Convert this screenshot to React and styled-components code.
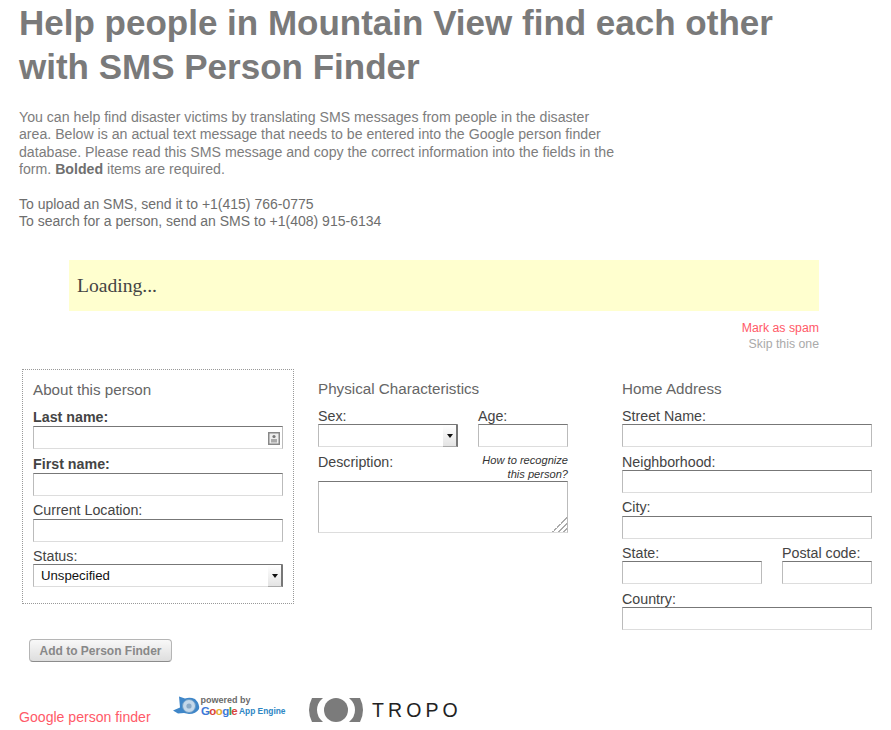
import React from 'react'
import styled, { createGlobalStyle } from 'styled-components'

const GlobalStyle = createGlobalStyle`
  html, body { margin: 0; padding: 0; background: #fff; overflow: hidden; }
  body { font-family: "Liberation Sans", Arial, sans-serif; }
  * { box-sizing: border-box; }
`

const Page = styled.div`
  width: 891px;
  height: 730px;
  overflow: hidden;
  display: flex;
  flex-direction: column;
`

const Intro = styled.div`
  padding-left: 19px;
`

const Title = styled.h1`
  margin: 1px 0 0;
  font-size: 35px;
  line-height: 44px;
  font-weight: bold;
  color: #7a7a7a;
  width: 800px;
`

const Blurb = styled.p`
  margin: 20px 0 0;
  width: 600px;
  font-size: 14.15px;
  line-height: 17.4px;
  color: #7d7d7d;
  b { color: #6f6f6f; }
`

const Numbers = styled(Blurb)`
  margin-top: 17px;
  font-size: 14px;
  color: #6e6e6e;
`

const MessageBox = styled.div`
  margin: 30px 0 0 69px;
  width: 750px;
  height: 51px;
  background: #ffffcf;
  padding-left: 8px;
  display: flex;
  align-items: center;
  font-family: "Liberation Serif", serif;
  font-size: 19.6px;
  color: #444;
`

const Actions = styled.div`
  width: 819px;
  margin-top: 9px;
  text-align: right;
  font-size: 12.3px;
  line-height: 16px;
`

const ActionLink = styled.div`
  color: ${p => p.$color};
`

const Columns = styled.div`
  display: flex;
  margin: 17px 0 0 22px;
  align-items: flex-start;
`

const Card = styled.div`
  width: 272px;
  height: 235px;
  border: 1px dotted #999;
  padding: 11px 10px 0;
`

const CardTitle = styled.h2`
  margin: 0 0 11px;
  font-size: 15.2px;
  line-height: 17px;
  font-weight: normal;
  color: #666;
`

const Column = styled.div`
  width: 250px;
  margin-left: ${p => p.$gap}px;
  padding-top: 11px;
`

const SectionTitle = styled(CardTitle)`
  margin-bottom: 10px;
`

const Field = styled.div`
  position: relative;
  margin-bottom: ${p => p.$gap ?? 6}px;
  width: ${p => p.$width ? `${p.$width}px` : 'auto'};
`

const Label = styled.label`
  display: block;
  height: 17px;
  padding-top: ${p => p.$lift ? 0 : 1}px;
  font-size: 14.25px;
  line-height: 16px;
  font-weight: ${p => p.$bold ? 'bold' : 'normal'};
  color: #444;
`

const TextInput = styled.input`
  display: block;
  width: 100%;
  height: 23px;
  margin: 0;
  padding: 0 4px;
  border: 1px solid;
  border-color: #777 #bbb #ddd;
  border-radius: 0;
  background: #fff;
  outline: none;
`

const SelectWrap = styled.div`
  position: relative;
`

const Select = styled.select`
  display: block;
  width: 100%;
  height: 23px;
  padding: 0 7px;
  border: 1px solid;
  border-color: #777 #bbb #ddd;
  border-radius: 0;
  background: #fff;
  appearance: none;
  font-family: "Liberation Sans", Arial, sans-serif;
  font-size: 13.2px;
  color: #111;
`

const SelectArrow = styled.span`
  position: absolute;
  top: 1px;
  right: 0;
  width: 15px;
  height: 22px;
  background: linear-gradient(#fff, #e4e4e4);
  border-right: 2px solid #777;
  border-bottom: 1px solid #aaa;
  pointer-events: none;
  &::after {
    content: "";
    position: absolute;
    left: 4px;
    top: 9px;
    border: 3.5px solid transparent;
    border-top: 4px solid #111;
    border-bottom: 0;
  }
`

const ContactIcon = styled.svg`
  position: absolute;
  right: 3px;
  top: 23px;
`

const FieldRow = styled.div`
  display: flex;
  justify-content: space-between;
`

const DescriptionHead = styled.div`
  display: flex;
  justify-content: space-between;
  align-items: flex-start;
  height: 29px;
  margin-top: 5px;
`

const DescriptionLabel = styled(Label)`
  margin-top: 1px;
`

const Hint = styled.div`
  font-size: 11.1px;
  line-height: 14px;
  font-style: italic;
  text-align: right;
  color: #333;
  padding-top: 1px;
`

const Description = styled.textarea`
  display: block;
  width: 250px;
  height: 52px;
  margin: 0;
  border: 1px solid;
  border-color: #777 #bbb #ddd;
  border-radius: 0;
  outline: none;
  &::-webkit-resizer {
    background: linear-gradient(135deg, transparent 50%, #aaa 50%, #aaa 56%, transparent 56%, transparent 68%, #aaa 68%, #aaa 74%, transparent 74%, transparent 86%, #aaa 86%, #aaa 92%, transparent 92%);
  }
`

const AddButton = styled.button`
  align-self: flex-start;
  margin: 3px 0 0 29px;
  width: 143px;
  height: 23px;
  padding: 0;
  border: 1px solid #b5b5b5;
  border-bottom-color: #8c8c8c;
  border-radius: 4px;
  background: linear-gradient(#f8f8f8, #dedede);
  font-family: "Liberation Sans", Arial, sans-serif;
  font-size: 12px;
  font-weight: bold;
  color: #888;
`

const Footer = styled.div`
  display: flex;
  align-items: flex-start;
  margin: 32px 0 0 19px;
`

const FinderLink = styled.div`
  width: 153px;
  margin-top: 15px;
  font-size: 14.1px;
  line-height: 17px;
  color: #ff5a68;
`

const AppEngineLogo = () => (
  <svg width="115" height="26" viewBox="0 0 115 26" style={{ display: 'block' }}>
    <path d="M1 16.5 L8 13.5 L7 2.5 L13 4.5 Q18 3 23 5 Q28 10 27 15 Q24 20 17 20 L12 19 L6 19.5 Z" fill="#3f86c8" />
    <circle cx="17" cy="12" r="6.5" fill="#c4d8ea" stroke="#6c9cc6" strokeWidth="1" />
    <circle cx="17" cy="12" r="2.6" fill="#8aa9c6" />
    <text x="28.5" y="8.5" fontFamily="Liberation Sans, Arial, sans-serif" fontSize="9" fontWeight="bold" fill="#6a6a6a">powered by</text>
    <text x="29" y="21" fontFamily="Liberation Sans, Arial, sans-serif" fontSize="11.5" fontWeight="bold" letterSpacing="-0.6">
      <tspan fill="#3b78d8">G</tspan>
      <tspan fill="#d9453a">o</tspan>
      <tspan fill="#e8b02c">o</tspan>
      <tspan fill="#3b78d8">g</tspan>
      <tspan fill="#3c9b4a">l</tspan>
      <tspan fill="#d9453a">e</tspan>
    </text>
    <text x="67" y="20" fontFamily="Liberation Sans, Arial, sans-serif" fontSize="8.4" fontWeight="bold" fill="#2d86c4">App Engine</text>
  </svg>
)

const TropoLogo = () => (
  <svg width="160" height="26" viewBox="0 0 160 26" style={{ display: 'block', margin: '3px 0 0 21px' }}>
    <circle cx="28" cy="13" r="12" fill="#7b7b7b" />
    <path d="M4 1 H15 Q9 6 9 13 Q9 20 15 25 H4 Q1 19 1 13 Q1 7 4 1 Z" fill="#7b7b7b" />
    <path d="M52 1 H41 Q47 6 47 13 Q47 20 41 25 H52 Q55 19 55 13 Q55 7 52 1 Z" fill="#7b7b7b" />
    <text x="64" y="20" fontFamily="Liberation Sans, Arial, sans-serif" fontSize="19.5" fill="#222" letterSpacing="4.1">TROPO</text>
  </svg>
)

const App = () => (
  <Page>
    <GlobalStyle />
    <Intro>
      <Title>Help people in Mountain View find each other with SMS Person Finder</Title>
      <Blurb>
        You can help find disaster victims by translating SMS messages from people in the disaster
        area. Below is an actual text message that needs to be entered into the Google person finder
        database. Please read this SMS message and copy the correct information into the fields in the
        form. <b>Bolded</b> items are required.
      </Blurb>
      <Numbers>
        To upload an SMS, send it to +1(415) 766-0775<br />
        To search for a person, send an SMS to +1(408) 915-6134
      </Numbers>
    </Intro>

    <MessageBox>Loading...</MessageBox>
    <Actions>
      <ActionLink $color="#ff5a68">Mark as spam</ActionLink>
      <ActionLink $color="#aaa">Skip this one</ActionLink>
    </Actions>

    <Columns>
      <Card>
        <CardTitle>About this person</CardTitle>
        <Field $gap={7}>
          <Label $bold $lift>Last name:</Label>
          <TextInput />
          <ContactIcon width="12" height="13" viewBox="0 0 12 13">
            <rect x="0.75" y="0.75" width="10.5" height="11.5" fill="#eee" stroke="#888" strokeWidth="1.5" />
            <circle cx="6" cy="4.5" r="1.6" fill="#777" />
            <rect x="3" y="7" width="6" height="3.5" fill="#aaa" />
          </ContactIcon>
        </Field>
        <Field>
          <Label $bold $lift>First name:</Label>
          <TextInput />
        </Field>
        <Field $gap={5}>
          <Label $lift>Current Location:</Label>
          <TextInput />
        </Field>
        <Field>
          <Label>Status:</Label>
          <SelectWrap>
            <Select defaultValue="Unspecified"><option>Unspecified</option></Select>
            <SelectArrow />
          </SelectWrap>
        </Field>
      </Card>

      <Column $gap={24}>
        <SectionTitle>Physical Characteristics</SectionTitle>
        <FieldRow>
          <Field $width={140} $gap={0}>
            <Label>Sex:</Label>
            <SelectWrap>
              <Select><option></option></Select>
              <SelectArrow />
            </SelectWrap>
          </Field>
          <Field $width={90} $gap={0}>
            <Label>Age:</Label>
            <TextInput />
          </Field>
        </FieldRow>
        <DescriptionHead>
          <DescriptionLabel>Description:</DescriptionLabel>
          <Hint>How to recognize<br />this person?</Hint>
        </DescriptionHead>
        <Description />
      </Column>

      <Column $gap={54}>
        <SectionTitle>Home Address</SectionTitle>
        <Field>
          <Label>Street Name:</Label>
          <TextInput />
        </Field>
        <Field>
          <Label>Neighborhood:</Label>
          <TextInput />
        </Field>
        <Field $gap={5}>
          <Label $lift>City:</Label>
          <TextInput />
        </Field>
        <FieldRow>
          <Field $width={140}>
            <Label>State:</Label>
            <TextInput />
          </Field>
          <Field $width={90}>
            <Label>Postal code:</Label>
            <TextInput />
          </Field>
        </FieldRow>
        <Field>
          <Label>Country:</Label>
          <TextInput />
        </Field>
      </Column>
    </Columns>

    <AddButton>Add to Person Finder</AddButton>

    <Footer>
      <FinderLink>Google person finder</FinderLink>
      <AppEngineLogo />
      <TropoLogo />
    </Footer>
  </Page>
)

export default App
